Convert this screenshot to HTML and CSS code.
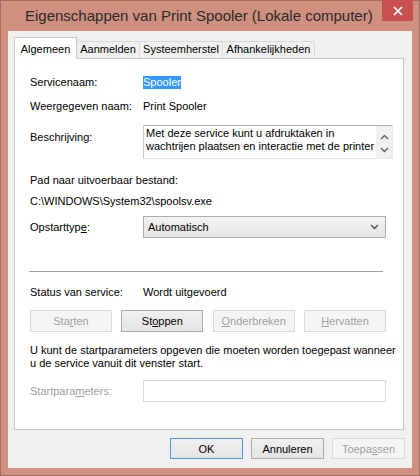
FILE: index.html
```html
<!DOCTYPE html>
<html>
<head>
<meta charset="utf-8">
<title>Eigenschappen van Print Spooler</title>
<link rel="stylesheet" href="styles.css">
</head>
<body>
<div class="window">
  <div class="titlebar">
    <div class="title">Eigenschappen van Print Spooler (Lokale computer)</div>
    <div class="close">
      <svg width="10" height="10" viewBox="0 0 10 10"><path d="M1 1 L9 9 M9 1 L1 9" stroke="#fff" stroke-width="1.7" fill="none"/></svg>
    </div>
  </div>
  <div class="client">
    <div class="tabs">
      <div class="tab active w1">Algemeen</div>
      <div class="tab w2">Aanmelden</div>
      <div class="tab w3">Systeemherstel</div>
      <div class="tab w4">Afhankelijkheden</div>
    </div>
    <div class="panel">
      <div class="row r1"><div class="label">Servicenaam:</div><div class="value"><span class="sel">Spooler</span></div></div>
      <div class="row r2"><div class="label">Weergegeven naam:</div><div class="value">Print Spooler</div></div>
      <div class="row r3">
        <div class="label lbl-top">Beschrijving:</div>
        <div class="textarea">
          <div class="tatext">
            <div class="taline">Met deze service kunt u afdruktaken in</div>
            <div class="taline">wachtrijen plaatsen en interactie met de printer</div>
          </div>
          <div class="scroll">
            <svg class="arr" width="9" height="6" viewBox="0 0 9 6"><path d="M1 5 L4.5 1.5 L8 5" stroke="#606060" stroke-width="1.4" fill="none"/></svg>
            <svg class="arr" width="9" height="6" viewBox="0 0 9 6"><path d="M1 1 L4.5 4.5 L8 1" stroke="#606060" stroke-width="1.4" fill="none"/></svg>
          </div>
        </div>
      </div>
      <div class="line r4">Pad naar uitvoerbaar bestand:</div>
      <div class="line r5">C:\WINDOWS\System32\spoolsv.exe</div>
      <div class="row r6">
        <div class="label">Opstarttyp<u>e</u>:</div>
        <div class="select"><span>Automatisch</span>
          <svg width="9" height="6" viewBox="0 0 9 6"><path d="M1 1 L4.5 4.5 L8 1" stroke="#505050" stroke-width="1.4" fill="none"/></svg>
        </div>
      </div>
      <div class="sep"></div>
      <div class="row r7"><div class="label">Status van service:</div><div class="value">Wordt uitgevoerd</div></div>
      <div class="svcbtns">
        <div class="btn dis">Sta<u>r</u>ten</div>
        <div class="btn">St<u>o</u>ppen</div>
        <div class="btn dis"><u>O</u>nderbreken</div>
        <div class="btn dis"><u>H</u>ervatten</div>
      </div>
      <div class="note">U kunt de startparameters opgeven die moeten worden toegepast wanneer<br>u de service vanuit dit venster start.</div>
      <div class="row r8">
        <div class="label dis-text">Startpara<u>m</u>eters:</div>
        <div class="input"></div>
      </div>
    </div>
    <div class="footer">
      <div class="btn fbtn def">OK</div>
      <div class="btn fbtn">Annuleren</div>
      <div class="btn fbtn dis">Toepa<u>s</u>sen</div>
    </div>
  </div>
</div>
</body>
</html>
```

FILE: styles.css
```css
* { box-sizing: border-box; }
html, body { margin: 0; padding: 0; }
body {
  width: 420px;
  height: 476px;
  overflow: hidden;
  background: #d0907f;
  font-family: "Liberation Sans", Arial, sans-serif;
  font-size: 11px;
  color: #000;
}
u { text-decoration: underline; text-underline-offset: 1px; }

.window {
  width: 420px;
  height: 476px;
  background: #d0907f;
  border: 1px solid #a46a5c;
  display: flex;
  flex-direction: column;
}

.titlebar {
  height: 30px;
  display: flex;
  align-items: flex-start;
}
.title {
  flex: 1;
  padding-left: 24px;
  font-size: 15px;
  line-height: 30px;
  color: #2a2a2a;
  white-space: nowrap;
}
.close {
  width: 31px;
  height: 21px;
  margin-top: -1px;
  margin-right: 6px;
  background: #c75050;
  display: flex;
  align-items: center;
  justify-content: center;
}

.client {
  margin: 0 7px;
  height: 437px;
  background: #f0f0f0;
  padding: 6px 8px 0 6px;
  display: flex;
  flex-direction: column;
}

.tabs {
  height: 21px;
  display: flex;
  align-items: flex-end;
}
.tab {
  height: 17px;
  border: 1px solid #d9d9d9;
  border-bottom: none;
  background: #f0f0f0;
  margin-left: -1px;
  text-align: center;
  line-height: 15px;
  white-space: nowrap;
}
.tab.active {
  height: 22px;
  margin-left: 0;
  margin-bottom: -1px;
  background: #fff;
  border-color: #c8c8c8;
  position: relative;
  z-index: 1;
  padding-top: 1px;
  line-height: 20px;
}
.w1 { width: 63px; }
.w2 { width: 64px; }
.w3 { width: 84px; }
.w4 { width: 93px; }

.panel {
  height: 372px;
  background: #fff;
  border: 1px solid #c8c8c8;
  padding: 13px 17px 0 15px;
  display: flex;
  flex-direction: column;
}

.row {
  display: flex;
  align-items: center;
  height: 20px;
}
.label {
  width: 113px;
  flex: none;
  white-space: nowrap;
}
.value { white-space: nowrap; }
.sel {
  background: #3399ff;
  color: #fff;
  line-height: 13px;
  display: inline-block;
}
.r2 { margin-top: 4px; }
.r3 { margin-top: 9px; height: 34px; align-items: flex-start; }
.lbl-top { margin-top: 5px; line-height: 14px; }
.textarea {
  flex: 1;
  height: 34px;
  display: flex;
  border-top: 1px solid #abadb3;
  border-left: 1px solid #c9cacf;
  border-right: 1px solid #e3e9ef;
  border-bottom: 1px solid #e3e9ef;
}
.tatext {
  flex: 1;
  padding: 1px 2px;
  overflow: hidden;
}
.taline {
  line-height: 13px;
  white-space: nowrap;
}
.scroll {
  width: 16px;
  background: #f0f0f0;
  display: flex;
  flex-direction: column;
  align-items: center;
  justify-content: space-around;
  padding: 4px 0 2px;
}

.line { height: 20px; line-height: 20px; white-space: nowrap; }
.r4 { margin-top: 11px; }
.r5 { margin-top: 1px; }
.r6 { margin-top: 5px; height: 22px; }
.select {
  flex: 1;
  height: 22px;
  border: 1px solid #acacac;
  background: linear-gradient(#f3f3f3, #e6e6e6);
  display: flex;
  align-items: center;
  justify-content: space-between;
  padding: 0 6px 0 4px;
}

.sep {
  margin-top: 33px;
  height: 1px;
  background: #a0a0a0;
  margin-left: -1px;
  margin-right: 3px;
}
.r7 { margin-top: 10px; }

.svcbtns {
  margin-top: 8px;
  display: flex;
  justify-content: space-between;
}
.btn {
  width: 82px;
  height: 22px;
  border: 1px solid #acacac;
  background: linear-gradient(#f0f0f0, #e5e5e5);
  display: flex;
  align-items: center;
  justify-content: center;
  white-space: nowrap;
}
.btn.dis {
  border-color: #d9d9d9;
  background: #f4f4f4;
  color: #a0a0a0;
}
.btn.def { border-color: #4f97e3; }

.note {
  margin-top: 12px;
  line-height: 13px;
  white-space: nowrap;
}
.r8 { margin-top: 10px; height: 22px; }
.dis-text { color: #a0a0a0; }
.input {
  flex: 1;
  height: 22px;
  border: 1px solid #d9d9d9;
  background: #fff;
}

.footer {
  margin-top: 8px;
  margin-right: -1px;
  display: flex;
  justify-content: flex-end;
  gap: 8px;
}
.fbtn { width: 73px; height: 21px; }
```
